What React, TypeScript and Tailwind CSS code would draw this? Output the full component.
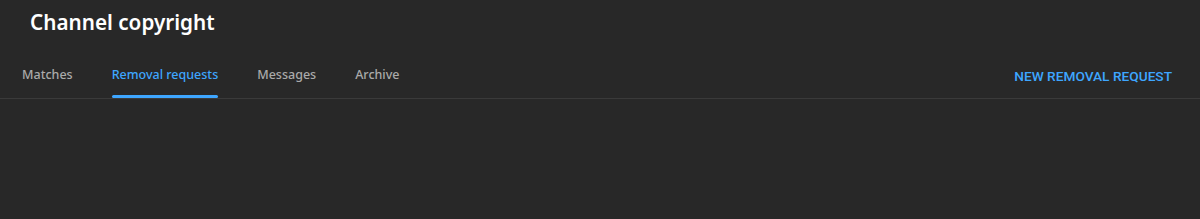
const tabs = ["Matches", "Removal requests", "Messages", "Archive"];

export default function App() {
  const active = "Removal requests";
  return (
    <div
      className="h-[219px] w-full bg-[#282828]"
      style={{ fontFamily: '"Noto Sans", "Open Sans", sans-serif' }}
    >
      <h1 className="pl-[30px] pt-[8px] text-[20.7px] font-semibold leading-[28px] text-white">
        Channel copyright
      </h1>
      <div className="mt-[29px] flex items-end justify-between border-b border-[#3a3a3a] pr-[28px]">
        <nav className="flex gap-[39px] pl-[22px]">
          {tabs.map((t) => (
            <div key={t} className="flex flex-col">
              <span
                className={
                  "text-[12.5px] font-medium leading-[20px] " +
                  (t === active ? "text-[#3ea6ff]" : "text-[#aaaaaa]")
                }
              >
                {t}
              </span>
              <div
                className={
                  "mt-[10px] h-[3px] rounded-full " +
                  (t === active ? "bg-[#3ea6ff]" : "bg-transparent")
                }
              />
            </div>
          ))}
        </nav>
        <button
          className="mb-[12px] text-[13.7px] font-medium uppercase leading-[20px] text-[#3ea6ff]"
          style={{ fontFamily: "Roboto, sans-serif" }}
        >
          New removal request
        </button>
      </div>
    </div>
  );
}
